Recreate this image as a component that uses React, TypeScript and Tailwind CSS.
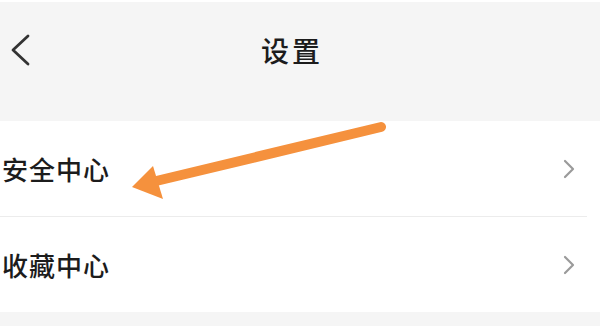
import React from "react";

const FONT = { fontFamily: '"Noto Sans CJK SC", "Noto Sans", sans-serif' };

function ChevronRight() {
  return (
    <svg width="12" height="20" viewBox="0 0 12 20" fill="none">
      <path
        d="M2 2 L10 10 L2 18"
        stroke="#9a9a9a"
        strokeWidth="2.2"
        strokeLinecap="round"
        strokeLinejoin="round"
      />
    </svg>
  );
}

function Row({ label }: { label: string }) {
  return (
    <div className="flex items-center justify-between pl-[2px] pr-[25px] h-[95px]">
      <span className="text-[26px] tracking-[1px] text-[#1c1c1c] font-medium leading-none">
        {label}
      </span>
      <ChevronRight />
    </div>
  );
}

export default function App() {
  return (
    <div
      className="relative w-[600px] h-[326px] overflow-hidden bg-[#f5f5f5]"
      style={FONT}
    >
      <div className="h-[2px] bg-white" />
      <div className="flex items-center h-[96px]">
        <div className="w-[60px] pl-[11px] flex items-center">
          <svg width="20" height="32" viewBox="0 0 20 32" fill="none">
            <path
              d="M17 2 L2 16 L17 30"
              stroke="#333333"
              strokeWidth="2.8"
              strokeLinecap="round"
              strokeLinejoin="round"
            />
          </svg>
        </div>
        <div className="flex-1 text-center text-[28px] tracking-[3px] text-[#1c1c1c] font-medium leading-none">
          设置
        </div>
        <div className="w-[76px]" />
      </div>
      <div className="h-[23px]" />
      <div className="bg-white">
        <Row label="安全中心" />
        <div className="h-px bg-[#ececec] mr-[13px]" />
        <Row label="收藏中心" />
      </div>

      <svg
        className="absolute inset-0 pointer-events-none"
        width="600"
        height="326"
        viewBox="0 0 600 326"
      >
        <line
          x1="381"
          y1="127"
          x2="152"
          y2="182"
          stroke="#f5913d"
          strokeWidth="10"
          strokeLinecap="round"
        />
        <polygon points="132,187 153,166 163,199" fill="#f5913d" />
      </svg>
    </div>
  );
}
